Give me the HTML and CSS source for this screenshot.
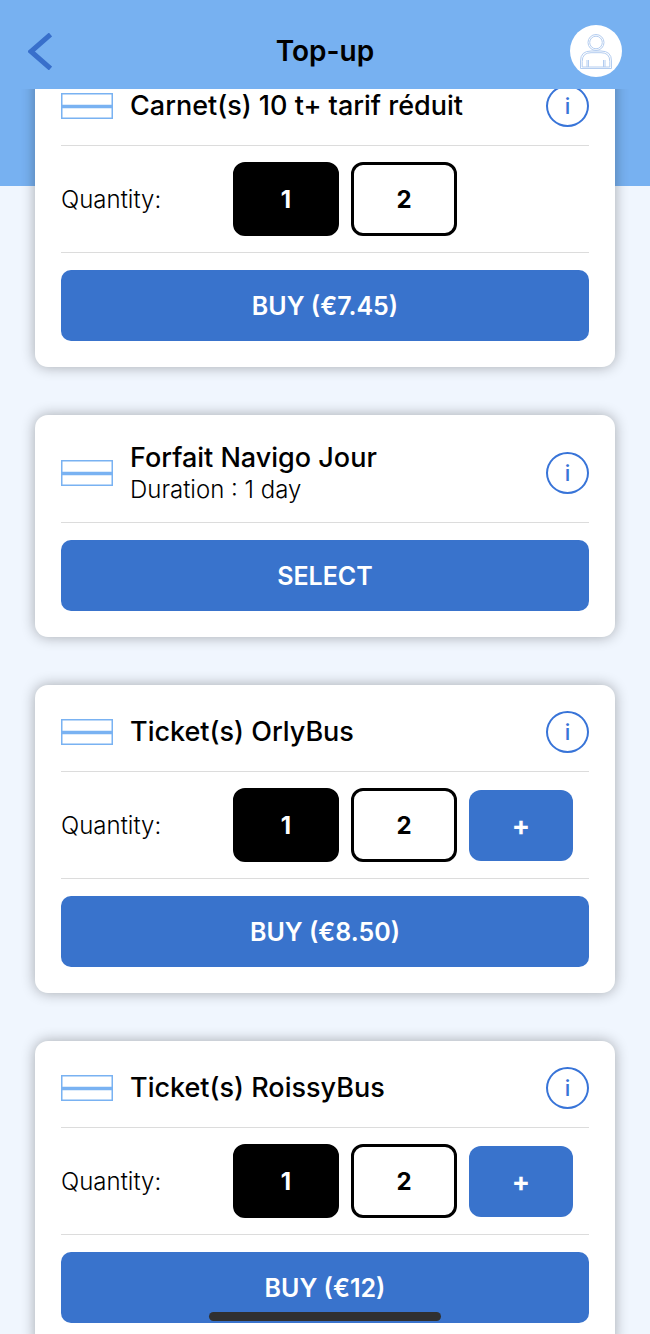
FILE: index.html
```html
<!DOCTYPE html>
<html lang="en">
<head>
<meta charset="utf-8">
<meta name="viewport" content="width=device-width, initial-scale=1">
<title>Top-up</title>
<link rel="stylesheet" href="styles.css">
</head>
<body>
<svg class="defs" aria-hidden="true">
  <symbol id="ticket" viewBox="0 0 52 26">
    <path d="M.75 .75H51.25V25.25H.75Z" fill="none" stroke="#79b2f2" stroke-width="1.5"/>
    <path d="M1 13.5H51" stroke="#79b2f2" stroke-width="3.5"/>
  </symbol>
</svg>
<div class="app">
  <header class="bar">
    <button class="back" aria-label="Back">
      <svg viewBox="0 0 24 37" width="24" height="37"><path d="M22.500 1.500L3 18.500L22.500 35.500" fill="none" stroke="#386fcb" stroke-width="5"/></svg>
    </button>
    <h1 class="bar-title">Top-up</h1>
    <button class="avatar" aria-label="Account">
      <svg viewBox="0 0 52 52" width="52" height="52" fill="none" stroke="#b4cdf0" stroke-width="1">
        <circle cx="26" cy="17.500" r="8"/>
        <circle cx="26" cy="17.500" r="6.300"/>
        <path d="M10.500 43.500V36Q10.500 26 21 26H31Q41.500 26 41.500 36V43.500Z"/>
        <path d="M12.200 42V36.500Q12.200 27.700 21 27.700H31Q39.800 27.700 39.800 36.500V42Z"/>
        <path d="M17 35V42M18.500 35V42M33.500 35V42M35 35V42"/>
      </svg>
    </button>
  </header>
  <main class="scroller">
    <div class="list">
      <section class="card">
        <div class="head">
          <svg class="ticket"><use href="#ticket"/></svg>
          <h2 class="name">Carnet(s) 10 t+ tarif réduit</h2>
          <button class="info" aria-label="Information">i</button>
        </div>
        <div class="quantity">
          <span class="label">Quantity:</span>
          <button class="option selected" aria-pressed="true">1</button>
          <button class="option" aria-pressed="false">2</button>
        </div>
        <button class="action">BUY (€7.45)</button>
      </section>
      <section class="card">
        <div class="head">
          <svg class="ticket"><use href="#ticket"/></svg>
          <div class="text">
            <h2 class="name">Forfait Navigo Jour</h2>
            <p class="label">Duration : 1 day</p>
          </div>
          <button class="info" aria-label="Information">i</button>
        </div>
        <button class="action">SELECT</button>
      </section>
      <section class="card">
        <div class="head">
          <svg class="ticket"><use href="#ticket"/></svg>
          <h2 class="name">Ticket(s) OrlyBus</h2>
          <button class="info" aria-label="Information">i</button>
        </div>
        <div class="quantity">
          <span class="label">Quantity:</span>
          <button class="option selected" aria-pressed="true">1</button>
          <button class="option" aria-pressed="false">2</button>
          <button class="option more" aria-label="More">+</button>
        </div>
        <button class="action">BUY (€8.50)</button>
      </section>
      <section class="card">
        <div class="head">
          <svg class="ticket"><use href="#ticket"/></svg>
          <h2 class="name">Ticket(s) RoissyBus</h2>
          <button class="info" aria-label="Information">i</button>
        </div>
        <div class="quantity">
          <span class="label">Quantity:</span>
          <button class="option selected" aria-pressed="true">1</button>
          <button class="option" aria-pressed="false">2</button>
          <button class="option more" aria-label="More">+</button>
        </div>
        <button class="action">BUY (€12)</button>
      </section>
    </div>
  </main>
  <div class="home-indicator"></div>
</div>
</body>
</html>
```
FILE: styles.css
```css
* {
  box-sizing: border-box;
  margin: 0;
}

body {
  font-family: Inter, "Liberation Sans", sans-serif;
  color: #000;
}

button {
  padding: 0;
  border: 0;
  background: none;
  font: inherit;
  color: inherit;
}

.defs {
  position: absolute;
  width: 0;
  height: 0;
}

.app {
  position: relative;
  display: flex;
  flex-direction: column;
  height: 100vh;
}

.bar {
  display: grid;
  grid-template-columns: 52px 1fr 52px;
  align-items: center;
  padding: 25px 28px 12px;
  background: #77b1f1;
}

.back,
.avatar {
  display: flex;
}

.bar-title {
  text-align: center;
  font-size: 28px;
  line-height: 32px;
  font-weight: 600;
}

.avatar {
  border-radius: 50%;
  background: #fff;
}

.scroller {
  flex: 1;
  min-height: 0;
  overflow-y: auto;
  scrollbar-width: none;
  background: linear-gradient(#77b1f1 97px, #f0f6fe 97px);
}

.list {
  display: flex;
  flex-direction: column;
  gap: 48px;
  margin-top: -30px;
  padding: 0 35px 48px;
}

.card {
  padding: 26px;
  border-radius: 13px;
  background: #fff;
  box-shadow: 0 0 14px rgba(0, 0, 0, 0.32);
}

.head {
  display: flex;
  align-items: center;
  padding-bottom: 18px;
  border-bottom: 1px solid #dcdcdc;
}

.ticket {
  flex: none;
  width: 52px;
  height: 26px;
  margin-right: 17px;
}

.name {
  flex: 1;
  font-size: 27px;
  line-height: 34px;
  font-weight: 500;
}

.text {
  flex: 1;
}

.label {
  font-size: 24px;
  line-height: 29px;
  font-weight: 300;
}

.info {
  width: 43px;
  height: 42px;
  border: 2px solid #3874d8;
  border-radius: 50%;
  font-size: 22px;
  font-weight: 500;
  color: #3874d8;
}

.quantity {
  display: flex;
  align-items: center;
  gap: 12px;
  padding: 16px 0;
  border-bottom: 1px solid #dcdcdc;
}

.quantity .label {
  width: 160px;
}

.option {
  width: 106px;
  height: 74px;
  border: 3px solid #000;
  border-radius: 12px;
  font-size: 24px;
  font-weight: 700;
}

.option.selected {
  background: #000;
  color: #fff;
}

.option.more {
  width: 104px;
  height: 71px;
  border: 0;
  background: #3973cc;
  color: #fff;
  font-size: 27px;
}

.action {
  display: block;
  width: 100%;
  height: 71px;
  margin-top: 17px;
  border-radius: 10px;
  background: #3973cc;
  font-size: 25px;
  font-weight: 600;
  color: #fff;
}

.home-indicator {
  position: absolute;
  bottom: 13px;
  left: 50%;
  width: 232px;
  height: 9px;
  margin-left: -116px;
  border-radius: 5px;
  background: #303030;
}
```
